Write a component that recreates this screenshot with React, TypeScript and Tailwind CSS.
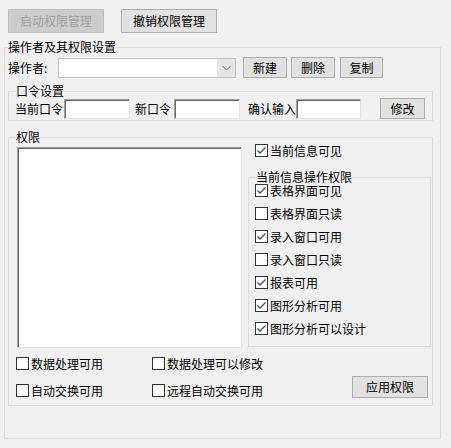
import React from "react";

const font = "font-['Microsoft_YaHei','Noto_Sans_CJK_SC',sans-serif]";

function Btn({ label, className = "", disabled = false }: { label: string; className?: string; disabled?: boolean }) {
  return (
    <button
      className={
        "flex items-center justify-center border text-[12px] leading-none " +
        (disabled
          ? "bg-[#cccccc] border-[#bfbfbf] text-[#a0a0a0] "
          : "bg-[#e1e1e1] border-[#adadad] text-black ") +
        className
      }
    >
      {label}
    </button>
  );
}

function Sunken({ className = "" }: { className?: string }) {
  return (
    <div
      className={
        "bg-white border border-t-[#a0a0a0] border-l-[#a0a0a0] border-r-[#e3e3e3] border-b-[#e3e3e3] shadow-[inset_1px_1px_0_#696969] " +
        className
      }
    />
  );
}

function Check({ label, checked = false, className = "" }: { label: string; checked?: boolean; className?: string }) {
  return (
    <div className={"flex items-center h-[13px] " + className}>
      <span className="w-[13px] h-[13px] border border-[#333333] bg-white flex items-center justify-center shrink-0">
        {checked && (
          <svg width="11" height="11" viewBox="0 0 11 11">
            <path d="M1.5 5.5 L4 8 L9.5 2.5" fill="none" stroke="#4d4d4d" strokeWidth="1.4" />
          </svg>
        )}
      </span>
      <span className="ml-[2px] text-[12px] leading-[13px] whitespace-nowrap">{label}</span>
    </div>
  );
}

function Legend({ text, className = "" }: { text: string; className?: string }) {
  return <legend className={"text-[12px] leading-[14px] px-0 " + className}>{text}</legend>;
}

export default function App() {
  return (
    <div className={"w-[451px] h-[448px] bg-[#f0f0f0] text-black pl-[4px] pt-[9px] " + font}>
      {/* top buttons */}
      <div className="flex">
        <Btn label="启动权限管理" disabled className="ml-[4px] w-[96px] h-[24px]" />
        <Btn label="撤销权限管理" className="ml-[17px] w-[96px] h-[24px]" />
      </div>

      {/* 操作者及其权限设置 */}
      <fieldset className="mt-[7px] w-[437px] h-[399px] border border-[#dcdcdc]">
        <Legend text="操作者及其权限设置" className="ml-[3px]" />

        <div className="flex items-center h-[21px] mt-[3px] pl-[3px]">
          <span className="w-[50px] text-[12px] whitespace-nowrap">操作者:</span>
          <div className="w-[178px] h-[20px] border border-[#c4c4c4] bg-white flex">
            <div className="flex-1" />
            <div className="w-[18px] h-full bg-[#e5e5e5] flex items-center justify-center">
              <svg width="9" height="6" viewBox="0 0 9 6">
                <path d="M0.5 1 L4.5 5 L8.5 1" fill="none" stroke="#606060" strokeWidth="1" />
              </svg>
            </div>
          </div>
          <Btn label="新建" className="ml-[7px] w-[44px] h-[21px]" />
          <Btn label="删除" className="ml-[4px] w-[44px] h-[21px]" />
          <Btn label="复制" className="ml-[5px] w-[43px] h-[21px]" />
        </div>

        {/* 口令设置 */}
        <fieldset className="ml-[3px] mt-[6px] w-[425px] h-[37px] border border-[#dcdcdc]">
          <Legend text="口令设置" className="ml-[7px]" />
          <div className="flex items-center h-[21px] pl-[6px] text-[12px] whitespace-nowrap">
            <span>当前口令</span>
            <Sunken className="ml-[1px] w-[66px] h-[20px]" />
            <span className="ml-[5px]">新口令</span>
            <Sunken className="ml-[3px] w-[66px] h-[20px]" />
            <span className="ml-[8px]">确认输入</span>
            <Sunken className="w-[65px] h-[20px]" />
            <Btn label="修改" className="ml-[19px] w-[45px] h-[21px]" />
          </div>
        </fieldset>

        {/* 权限 */}
        <fieldset className="ml-[3px] mt-[9px] w-[425px] h-[276px] border border-[#dcdcdc]">
          <Legend text="权限" className="ml-[7px]" />
          <div className="flex">
            <Sunken className="ml-[8px] mt-[3px] w-[225px] h-[201px]" />
            <div className="ml-[6px] w-[183px] flex flex-col">
              <Check label="当前信息可见" checked className="ml-[7px] mt-[0px]" />
              <fieldset className="mt-[13px] w-[183px] h-[177px] border border-[#dcdcdc]">
                <Legend text="当前信息操作权限" className="ml-[7px]" />
                <div className="flex flex-col gap-[10px] pl-[6px]">
                  <Check label="表格界面可见" checked />
                  <Check label="表格界面只读" />
                  <Check label="录入窗口可用" checked />
                  <Check label="录入窗口只读" />
                  <Check label="报表可用" checked />
                  <Check label="图形分析可用" checked />
                  <Check label="图形分析可以设计" checked />
                </div>
              </fieldset>
            </div>
          </div>

          <div className="flex mt-[9px]">
            <div className="grid grid-cols-[136px_136px] gap-y-[12px] pl-[7px]">
              <Check label="数据处理可用" />
              <Check label="数据处理可以修改" />
              <Check label="自动交换可用" />
              <Check label="远程自动交换可用" />
            </div>
            <Btn label="应用权限" className="ml-auto mr-[4px] mt-[19px] w-[76px] h-[22px]" />
          </div>
        </fieldset>
      </fieldset>
    </div>
  );
}
